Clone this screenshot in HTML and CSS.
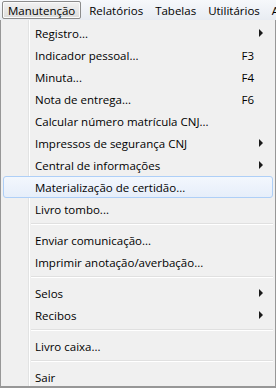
FILE: index.html
```html
<!DOCTYPE html>
<html>
<head>
    <title>Menu Manutenção</title>
    <link rel="stylesheet" href="styles.css">
</head>
<body>
    <div class="menubar">
        <span class="top-item open">Manutenção</span>
        <span class="top-item">Relatórios</span>
        <span class="top-item">Tabelas</span>
        <span class="top-item">Utilitários</span>
        <span class="top-item">Ajuda</span>
    </div>

    <div class="dropdown">
        <div class="item"><span class="label">Registro...</span><span class="arrow"></span></div>
        <div class="item"><span class="label">Indicador pessoal...</span><span class="key">F3</span></div>
        <div class="item"><span class="label">Minuta...</span><span class="key">F4</span></div>
        <div class="item"><span class="label">Nota de entrega...</span><span class="key">F6</span></div>
        <div class="item"><span class="label">Calcular número matrícula CNJ...</span></div>
        <div class="item"><span class="label">Impressos de segurança CNJ</span><span class="arrow"></span></div>
        <div class="item"><span class="label">Central de informações</span><span class="arrow"></span></div>
        <div class="item hover"><span class="label">Materialização de certidão...</span></div>
        <div class="item"><span class="label">Livro tombo...</span></div>
        <div class="sep"></div>
        <div class="item"><span class="label">Enviar comunicação...</span></div>
        <div class="item"><span class="label">Imprimir anotação/averbação...</span></div>
        <div class="sep"></div>
        <div class="item"><span class="label">Selos</span><span class="arrow"></span></div>
        <div class="item"><span class="label">Recibos</span><span class="arrow"></span></div>
        <div class="sep"></div>
        <div class="item"><span class="label">Livro caixa...</span></div>
        <div class="sep"></div>
        <div class="item"><span class="label">Sair</span></div>
    </div>
</body>
</html>
```

FILE: styles.css
```css
body { margin: 0; width: 276px; height: 388px; overflow: hidden; background: #f0f0f0; font-family: "Open Sans", "Noto Sans", sans-serif; font-size: 11.5px; color: #000; }

.menubar { height: 20px; display: flex; align-items: stretch; background: linear-gradient(#f6f8fb, #e8ecf2); white-space: nowrap; overflow: hidden; }
.top-item { display: flex; align-items: center; padding: 0 5px; margin: 1px 0; border: 1px solid transparent; border-radius: 2px; }
.top-item.open { margin-left: 2px; margin-right: 2px; border-color: #8c8c8c; background: linear-gradient(#f2f2f2, #dcdcdc); box-shadow: inset 0 0 0 1px #fafafa; }

.dropdown { position: relative; height: 368px; box-sizing: border-box; border: 1px solid #979797; border-top: none; border-bottom-width: 2px; padding: 2px 2px 0 2px; }
.dropdown::before { content: ""; position: absolute; left: 27px; top: 0; bottom: 0; width: 1px; background: #e2e3e3; border-right: 1px solid #ffffff; }

.item { position: relative; height: 22px; box-sizing: border-box; display: flex; align-items: center; padding-left: 31px; padding-right: 9px; border: 1px solid transparent; border-radius: 3px; }
.item .label { flex: 1; }
.item .key { margin-right: 9px; }
.item.hover { border-color: #aecff7; background: linear-gradient(#f3f7fd, #e6eefa); z-index: 1; }

.arrow { width: 0; height: 0; border-top: 4px solid transparent; border-bottom: 4px solid transparent; border-left: 4px solid #1a1a1a; }

.sep { height: 1px; margin: 3px 0 4px 28px; background: #e0e0e0; border-bottom: 1px solid #ffffff; }
```
